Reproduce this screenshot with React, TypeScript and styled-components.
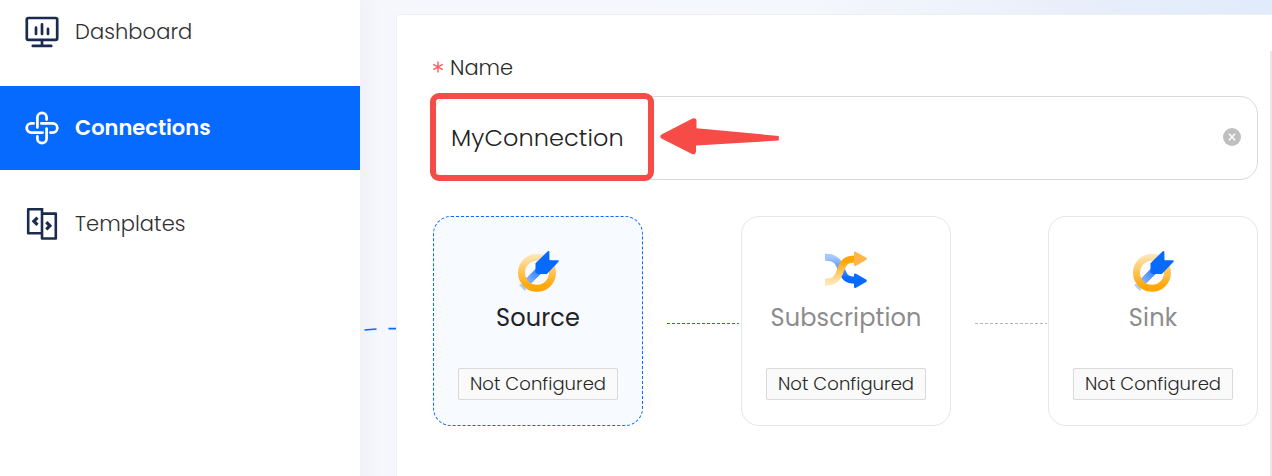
import React from "react";
import styled, { createGlobalStyle, css } from "styled-components";

const GlobalStyle = createGlobalStyle`
  *, *::before, *::after { box-sizing: border-box; }
  body { margin: 0; background: #fff; font-family: Poppins, Inter, "Liberation Sans", sans-serif; }
`;

const Screen = styled.div`
  display: flex;
  width: 1272px;
  height: 476px;
  overflow: hidden;
`;

const Sidebar = styled.nav`
  flex: 0 0 360px;
  display: flex;
  flex-direction: column;
  gap: 12px;
  height: 572px;
  margin-top: -10px;
  background: #fff;
  box-shadow: 0 0 24px rgba(30, 40, 70, 0.05);
  z-index: 1;
`;

const NavItem = styled.a<{ $active?: boolean }>`
  display: flex;
  align-items: center;
  gap: 16px;
  height: 84px;
  padding-left: 25px;
  color: ${(p) => (p.$active ? "#fff" : "#2f2f2f")};
  background: ${(p) => (p.$active ? "#076aff" : "transparent")};
`;

const NavLabel = styled.span<{ $bold?: boolean }>`
  padding-bottom: 2px;
  font-size: 21px;
  font-weight: ${(p) => (p.$bold ? 600 : 300)};
  letter-spacing: ${(p) => (p.$bold ? 0 : 0.08)}px;
  white-space: nowrap;
`;

const Main = styled.main`
  position: relative;
  flex: 1;
  display: flex;
  padding: 14px 0 0 36px;
  background: linear-gradient(100deg, #f6f7fc 0%, #f4f7fc 50%, #e8eefa 80%, #e0ebfb 100%) 0 0 / 100% 14px no-repeat, #f6f7fc;
`;

const Wire = styled.svg`
  position: absolute;
  left: 0;
  top: 320px;
`;

const Panel = styled.section`
  flex: 1;
  display: flex;
  height: 500px;
  background: #fff;
  border: 1px solid #efefef;
  border-right: 0;
  border-radius: 3px 0 0 0;
`;

const Form = styled.div`
  width: 861px;
  padding: 35px 0 0 36px;
`;

const ScrollTrack = styled.div`
  width: 2px;
  margin: 36px 0 0 auto;
  background: #e8e8e8;
`;

const FieldLabel = styled.label`
  display: flex;
  align-items: center;
  gap: 7px;
  height: 34px;
  font-size: 21px;
  font-weight: 300;
  color: #2b2b2b;
`;

const Field = styled.div`
  position: relative;
  display: flex;
  align-items: center;
  justify-content: space-between;
  width: 825px;
  height: 84px;
  margin-top: 12px;
  padding: 0 16px 2px 17px;
  border: 1px solid #d9d9d9;
  border-radius: 18px;
`;

const FieldValue = styled.span`
  font-size: 24px;
  font-weight: 300;
  letter-spacing: 0.08px;
  color: #222;
`;

const Highlight = styled.div`
  position: absolute;
  left: -4px;
  top: -4px;
  width: 224px;
  height: 88px;
  border: 6px solid #f74b47;
  border-radius: 9px;
`;

const Arrow = styled.svg`
  position: absolute;
  left: 226px;
  top: 20px;
`;

const Steps = styled.div`
  display: flex;
  align-items: flex-start;
  width: 825px;
  margin-top: 36px;
`;

const StepCard = styled.article<{ $active?: boolean }>`
  flex: 0 0 210px;
  display: flex;
  flex-direction: column;
  align-items: center;
  height: 210px;
  padding-top: 34px;
  border: 1px solid #e6e6e6;
  border-radius: 18px;
  ${(p) =>
    p.$active &&
    css`
      background: #f7faff;
      border: 1px dashed #076aff;
    `}
`;

const StepTitle = styled.h3<{ $active?: boolean }>`
  margin: 8px 0 0;
  height: 34px;
  line-height: 34px;
  font-size: 24px;
  font-weight: 400;
  letter-spacing: 0.15px;
  color: ${(p) => (p.$active ? "#222" : "#8c8c8c")};
`;

const Tag = styled.span`
  display: flex;
  align-items: center;
  justify-content: center;
  width: 160px;
  height: 32px;
  margin-top: 33px;
  padding-bottom: 1px;
  border: 1px solid #d9d9d9;
  border-radius: 2px;
  background: #fafafa;
  font-size: 18px;
  font-weight: 300;
  letter-spacing: 0.05px;
  white-space: nowrap;
  color: #262626;
`;

const Link = styled.div<{ $color: string; $gap: number }>`
  flex: 0 0 72px;
  margin: 107px ${(p) => p.$gap}px 0 24px;
  height: 1px;
  background: repeating-linear-gradient(90deg, ${(p) => p.$color} 0 3px, transparent 3px 5px);
`;

const DashboardIcon = () => (
  <svg width="34" height="34" viewBox="0 0 34 34" fill="none" stroke="#1b2b50" strokeWidth="2.7" strokeLinecap="round">
    <rect x="1.8" y="3" width="30.4" height="21.8" rx="1.5" />
    <path d="M17 25.400v4.500M7.8 30.900h18.4M11 12.600v6.400M17 9.400v9.600M23 13.900v5.100" />
  </svg>
);

const ConnectionsIcon = () => (
  <svg width="34" height="34" viewBox="0 0 34 34" fill="none" stroke="#fff" strokeWidth="2.7" strokeLinecap="round">
    <path d="M12.4 16.500V6.400a4.600 4.600 0 0 1 9.200 0V8.600" />
    <path d="M16.400 12.400H27.700a4.600 4.600 0 0 1 0 9.200H25.400" />
    <path d="M21.600 17.500V27.600a4.600 4.600 0 0 1-9.200 0V25.400" />
    <path d="M17.600 21.600H6.300a4.600 4.600 0 0 1 0-9.200H8.600" />
  </svg>
);

const TemplatesIcon = () => (
  <svg width="34" height="34" viewBox="0 0 34 34" fill="none" stroke="#1b2b50" strokeWidth="2.6">
    <path d="M17 26.200H3.2V2.200H17M17 1V31.500H30.800V6.600H17" strokeLinejoin="round" />
    <path d="M12.5 10.600 8.900 14.200l3.600 3.600M21.300 15.200l3.600 3.600-3.600 3.600" strokeWidth="3.200" />
  </svg>
);

const PlugIcon = ({ id }: { id: string }) => (
  <svg width="42" height="42" viewBox="0 0 42 42">
    <defs>
      <linearGradient id={`${id}-ring`} x1="0" y1="3" x2="0" y2="42" gradientUnits="userSpaceOnUse">
        <stop offset="0" stopColor="#ffe8bd" />
        <stop offset="0.8" stopColor="#ffa90c" />
        <stop offset="1" stopColor="#ffa600" />
      </linearGradient>
      <linearGradient id={`${id}-stem`} x1="24" y1="19" x2="4" y2="38" gradientUnits="userSpaceOnUse">
        <stop offset="0" stopColor="#2878ff" />
        <stop offset="1" stopColor="#b9d5ff" />
      </linearGradient>
    </defs>
    <path d="M20.5 17 25 21.5 8.500 37.500 9.200 38.400 7.700 39.700 2.200 34.200 3.700 32.800 4.800 33.500z" fill={`url(#${id}-stem)`} />
    <circle cx="20" cy="21.800" r="15.500" fill="none" stroke={`url(#${id}-ring)`} strokeWidth="7" />
    <path d="M19.500 17 24.500 22 14 32.500 9 27.500z" fill={`url(#${id}-stem)`} />
    <path d="M18.500 12.200 30.800 .2Q32.400 -.5 32.400 1.300V9.200H40.800Q42.500 9.200 41.500 10.800L29.900 23H20.700L18.500 21.500z" fill="#076aff" />
  </svg>
);

const ShuffleIcon = () => (
  <svg width="42" height="42" viewBox="0 0 42 42">
    <defs>
      <linearGradient id="sh-blue" x1="0" y1="0" x2="0" y2="1">
        <stop offset="0" stopColor="#a6c9ff" />
        <stop offset="0.9" stopColor="#076aff" />
      </linearGradient>
      <linearGradient id="sh-gold" x1="0" y1="0" x2="0" y2="1">
        <stop offset="0.1" stopColor="#ffa600" />
        <stop offset="1" stopColor="#ffe5b2" />
      </linearGradient>
    </defs>
    <path d="M0 6.200C9 5.500 13.500 9.500 16.500 18.500C19.500 27 22.500 29.300 30 29.300" fill="none" stroke="url(#sh-blue)" strokeWidth="7" />
    <path d="M0 31C9 31.500 12.500 28 15.500 19.500C18.500 10.500 22 7.900 30 7.900" fill="none" stroke="url(#sh-gold)" strokeWidth="7" />
    <path d="M29 2Q29 0 31 .9L41 6.500Q42.700 7.800 41 9L31 14.800Q29 15.500 29 13.800z" fill="#ffb54a" />
    <path d="M29 23.900Q29 21.900 31 22.800L41 28.400Q42.700 29.600 41 30.900L31 36.700Q29 37.400 29 35.700z" fill="#076aff" />
  </svg>
);

export default function App() {
  return (
    <>
      <GlobalStyle />
      <Screen>
        <Sidebar>
          <NavItem><DashboardIcon /><NavLabel>Dashboard</NavLabel></NavItem>
          <NavItem $active><ConnectionsIcon /><NavLabel $bold>Connections</NavLabel></NavItem>
          <NavItem><TemplatesIcon /><NavLabel>Templates</NavLabel></NavItem>
        </Sidebar>
        <Main>
          <Wire width="36" height="16" viewBox="0 0 36 16" stroke="#076aff" strokeWidth="1.6">
            <path d="M4.500 10 16.500 9M28.500 8.600H36" />
          </Wire>
          <Panel>
            <Form>
              <FieldLabel>
                <svg width="10" height="12" viewBox="0 0 10 12" stroke="#ff5a5c" strokeWidth="1.400">
                  <path d="M5 .5v11M.3 3.300l9.400 5.400M9.700 3.300.3 8.700" />
                </svg>
                Name
              </FieldLabel>
              <Field>
                <FieldValue>MyConnection</FieldValue>
                <svg width="18" height="18" viewBox="0 0 18 18">
                  <circle cx="9" cy="9" r="9" fill="#bfbfbf" />
                  <path d="m6 5.700 6 6.600M12 5.700l-6 6.600" stroke="#fff" strokeWidth="1.500" />
                </svg>
                <Highlight />
                <Arrow width="120" height="40" viewBox="0 0 120 40" fill="#f74b47">
                  <path d="M1.500 17.500 32.500 1.500Q36.500 .2 36.500 4V11.200L118.800 19V23.500L36 28.500V34.500Q35.500 38.300 32 37L1.500 21.500Q-1 19.500 1.500 17.500z" />
                </Arrow>
              </Field>
              <Steps>
                <StepCard $active>
                  <PlugIcon id="source" />
                  <StepTitle $active>Source</StepTitle>
                  <Tag>Not Configured</Tag>
                </StepCard>
                <Link $color="#076aff" $gap={2} />
                <StepCard>
                  <ShuffleIcon />
                  <StepTitle>Subscription</StepTitle>
                  <Tag>Not Configured</Tag>
                </StepCard>
                <Link $color="#b5b5b5" $gap={1} />
                <StepCard>
                  <PlugIcon id="sink" />
                  <StepTitle>Sink</StepTitle>
                  <Tag>Not Configured</Tag>
                </StepCard>
              </Steps>
            </Form>
            <ScrollTrack />
          </Panel>
        </Main>
      </Screen>
    </>
  );
}
